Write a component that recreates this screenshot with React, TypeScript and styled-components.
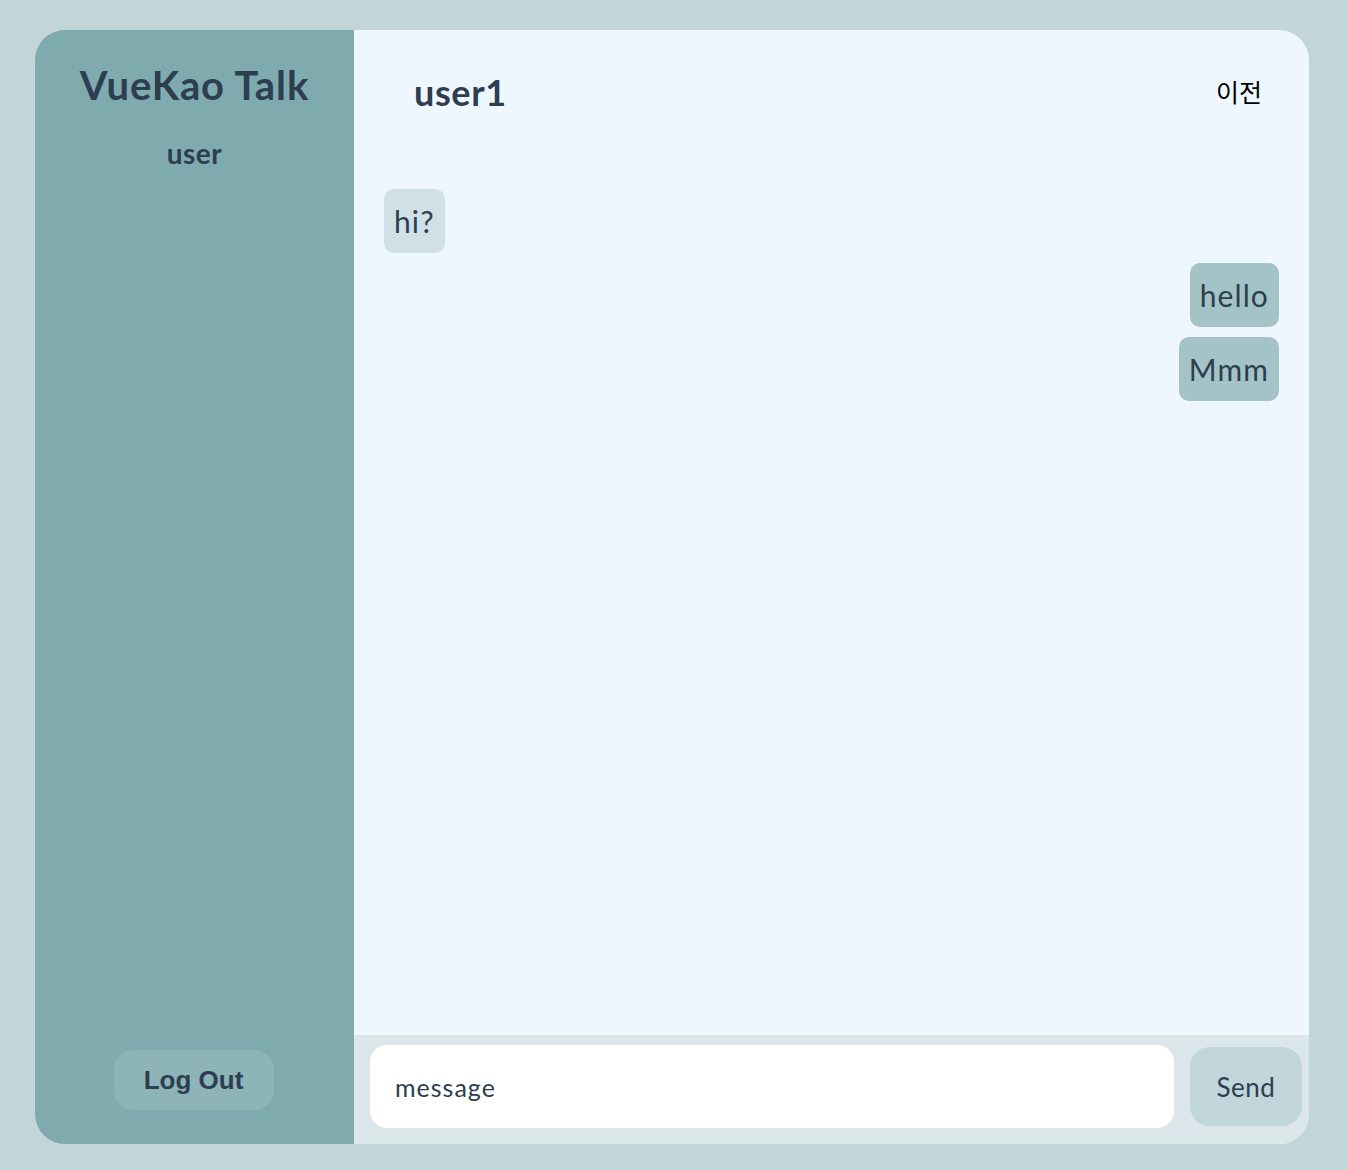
import React from "react";
import styled, { createGlobalStyle } from "styled-components";

const Global = createGlobalStyle`
  html, body { margin: 0; padding: 0; background: #c2d6da; }
  body { font-family: Lato, "Noto Sans", sans-serif; color: #2c3e50; }
  * { box-sizing: border-box; }
`;

const Page = styled.div`
  padding: 30px 39px 26px 35px;
  height: 1170px;
`;

const Frame = styled.div`
  display: flex;
  height: 1114px;
  border-radius: 30px;
  overflow: hidden;
`;

const Sidebar = styled.aside`
  width: 319px;
  background: #7faaae;
  display: flex;
  flex-direction: column;
  align-items: center;
  padding: 31px 0 34px;
`;

const Brand = styled.h1`
  margin: 0;
  font-size: 40px;
  font-weight: 700;
  line-height: 48px;
  letter-spacing: 0.9px;
`;

const Me = styled.div`
  margin-top: 27px;
  font-size: 28px;
  font-weight: 700;
  letter-spacing: 0.5px;
`;

const Spacer = styled.div`
  flex: 1;
`;

const LogOut = styled.button`
  width: 160px;
  height: 60px;
  margin-left: -2px;
  border: none;
  border-radius: 20px;
  background: #8db4b7;
  color: #2c3e50;
  font-family: "Liberation Sans", Arial, sans-serif;
  font-weight: 700;
  font-size: 26px;
`;

const Main = styled.main`
  flex: 1;
  background: #eff7fe;
  display: flex;
  flex-direction: column;
`;

const Header = styled.header`
  display: flex;
  justify-content: space-between;
  align-items: center;
  padding: 0 47px 0 60px;
  height: 124px;
`;

const Partner = styled.h2`
  margin: 0;
  font-size: 36px;
  font-weight: 700;
  line-height: 1;
  letter-spacing: 0.6px;
  margin-top: -1px;
`;

const Back = styled.button`
  border: none;
  background: none;
  padding: 0;
  font-family: "Noto Sans CJK KR", sans-serif;
  font-size: 25px;
  color: #000;
  margin-top: -3px;
`;

const Messages = styled.div`
  flex: 1;
  display: flex;
  flex-direction: column;
  gap: 10px;
  padding: 35px 30px 0 30px;
`;

const Bubble = styled.div<{ $mine?: boolean }>`
  align-self: ${(p) => (p.$mine ? "flex-end" : "flex-start")};
  background: ${(p) => (p.$mine ? "#a3c3c7" : "#d0e0e6")};
  border-radius: 10px;
  padding: 10px 10px;
  font-size: 30px;
  line-height: 44px;
  font-weight: 400;
  letter-spacing: 1.1px;
`;

const Composer = styled.form`
  background: #dbe6eb;
  height: 109px;
  display: flex;
  align-items: flex-start;
  padding: 10px 7px 0 16px;
  gap: 16px;
`;

const Input = styled.input`
  flex: 1;
  height: 83px;
  border: none;
  border-radius: 17px;
  background: #fff;
  padding: 0 25px;
  font-family: Lato, "Noto Sans", sans-serif;
  font-size: 25px;
  letter-spacing: 1px;
  color: #2c3e50;
  outline: none;
  &::placeholder { color: #2c3e50; }
`;

const Send = styled.button`
  width: 112px;
  height: 79px;
  margin-top: 2px;
  border: none;
  border-radius: 20px;
  background: #c0d6db;
  color: #2c3e50;
  font-family: Lato, "Noto Sans", sans-serif;
  font-size: 26px;
  letter-spacing: 0.5px;
`;

export default function App() {
  return (
    <>
      <Global />
      <Page>
        <Frame>
          <Sidebar>
            <Brand>VueKao Talk</Brand>
            <Me>user</Me>
            <Spacer />
            <LogOut>Log Out</LogOut>
          </Sidebar>
          <Main>
            <Header>
              <Partner>user1</Partner>
              <Back>이전</Back>
            </Header>
            <Messages>
              <Bubble>hi?</Bubble>
              <Bubble $mine>hello</Bubble>
              <Bubble $mine>Mmm</Bubble>
            </Messages>
            <Composer onSubmit={(e) => e.preventDefault()}>
              <Input placeholder="message" />
              <Send type="submit">Send</Send>
            </Composer>
          </Main>
        </Frame>
      </Page>
    </>
  );
}
